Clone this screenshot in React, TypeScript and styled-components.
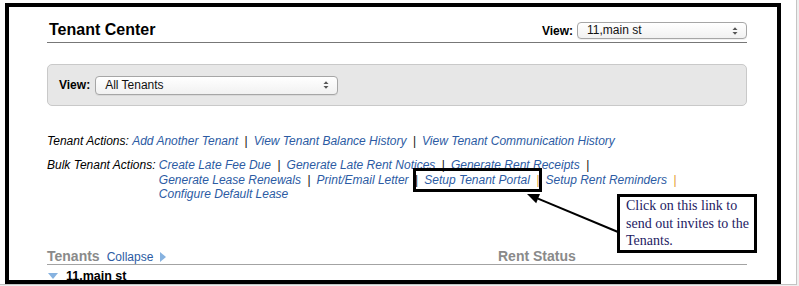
import styled, { createGlobalStyle } from 'styled-components';

const GlobalStyle = createGlobalStyle`
  html, body {
    margin: 0;
    padding: 0;
    background: #efefef;
  }
  body {
    font-family: 'Liberation Sans', Arial, sans-serif;
  }
`;

const Page = styled.div`
  box-sizing: border-box;
  width: 797px;
  height: 285px;
  padding: 3px 0 0 5px;
  background: #fff;
  border-right: 1px solid #c4c4c4;
  border-bottom: 1px solid #c4c4c4;
`;

const Frame = styled.div`
  position: relative;
  box-sizing: border-box;
  width: 776px;
  height: 281px;
  border: 4px solid #000;
  padding: 0 30px 0 38px;
  overflow: hidden;
`;

const Header = styled.div`
  display: flex;
  justify-content: space-between;
  align-items: flex-end;
  margin-top: 13px;
  padding-bottom: 3px;
  box-sizing: border-box;
  border-bottom: 1px solid #777;
  height: 23px;
`;

const Title = styled.div`
  font-size: 16px;
  font-weight: bold;
  color: #000;
  line-height: 18px;
  padding-left: 2px;
`;

const ViewField = styled.div`
  display: flex;
  align-items: center;
  gap: 4px;
`;

const ViewLabel = styled.span`
  font-size: 12px;
  font-weight: bold;
  color: #000;
`;

const SelectBox = styled.div<{ $width: number; $height: number }>`
  position: relative;
  box-sizing: border-box;
  width: ${(p) => p.$width}px;
  height: ${(p) => p.$height}px;
  border: 1px solid #a6a6a6;
  border-radius: 4px;
  background: linear-gradient(#ffffff, #f1f1f1);
  box-shadow: 0 1px 0 rgba(0, 0, 0, 0.06);
  font-size: 12px;
  color: #111;
  line-height: ${(p) => p.$height - 2}px;
  padding-left: 9px;
`;

const Arrows = styled.svg`
  position: absolute;
  right: 8px;
  top: 50%;
  transform: translateY(-50%);
`;

const Panel = styled.div`
  box-sizing: border-box;
  height: 42px;
  margin-top: 21px;
  padding: 0 11px;
  display: flex;
  align-items: center;
  gap: 5px;
  background: #e7e7e7;
  border: 1px solid #c9c9c9;
  border-radius: 5px;
`;

const ActionRow = styled.div<{ $top: number; $lh: number }>`
  display: flex;
  margin-top: ${(p) => p.$top}px;
  font-size: 12px;
  font-style: italic;
  line-height: ${(p) => p.$lh}px;
  color: #000;
`;

const ActionLabel = styled.span`
  white-space: pre;
`;

const LinkLines = styled.div`
  display: flex;
  flex-direction: column;
`;

const Line = styled.div`
  white-space: nowrap;
`;

const ActionLink = styled.a`
  color: #2c5ba3;
  text-decoration: none;
  cursor: pointer;
`;

const Sep = styled.span<{ $hot?: boolean }>`
  margin: 0 6px 0 6.5px;
  font-style: normal;
  color: ${(p) => (p.$hot ? '#e39a2b' : '#111')};
`;

const TenantsHead = styled.div`
  display: grid;
  grid-template-columns: 451px 1fr;
  margin-top: 47px;
  height: 15px;
  line-height: 15px;
  border-bottom: 1px solid #a3a3a3;
`;

const HeadCell = styled.div`
  display: flex;
  align-items: baseline;
`;

const HeadText = styled.span`
  font-size: 14px;
  font-weight: bold;
  color: #8a8a8a;
`;

const Collapse = styled.span`
  margin-left: 7px;
  font-size: 12px;
  color: #2c5ba3;
`;

const Triangle = styled.span<{ $dir: 'right' | 'down' }>`
  display: inline-block;
  width: 0;
  height: 0;
  ${(p) =>
    p.$dir === 'right'
      ? `border-top: 5.5px solid transparent;
         border-bottom: 5.5px solid transparent;
         border-left: 6px solid #86b2e0;
         margin-left: 7px;
         align-self: center;`
      : `border-left: 5.5px solid transparent;
         border-right: 5.5px solid transparent;
         border-top: 6px solid #86b2e0;`}
`;

const PropertyRow = styled.div`
  display: flex;
  align-items: center;
  gap: 8px;
  margin-top: 4px;
  padding-left: 1px;
  line-height: 15px;
`;

const PropertyName = styled.span`
  font-size: 12.5px;
  font-weight: bold;
  color: #000;
`;

const Highlight = styled.div`
  position: absolute;
  left: 404px;
  top: 161px;
  width: 129px;
  height: 24px;
  box-sizing: border-box;
  border: 3px solid #000;
`;

const Note = styled.div`
  position: absolute;
  left: 608px;
  top: 187px;
  width: 140px;
  height: 59px;
  box-sizing: border-box;
  border: 3px solid #000;
  background: #fff;
  padding: 0 0 0 6px;
  font-family: 'Liberation Serif', 'Times New Roman', serif;
  font-size: 14px;
  line-height: 17.5px;
  color: #1e2163;
`;

const ArrowLayer = styled.svg`
  position: absolute;
  left: 0;
  top: 0;
  pointer-events: none;
`;

const Select = ({ value, width, height }: { value: string; width: number; height: number }) => (
  <SelectBox $width={width} $height={height}>
    {value}
    <Arrows width="6" height="9" viewBox="0 0 6 9">
      <path d="M0.5 3.5 L3 0.8 L5.5 3.5 Z" fill="#555" />
      <path d="M0.5 5.5 L3 8.2 L5.5 5.5 Z" fill="#555" />
    </Arrows>
  </SelectBox>
);

export default function App() {
  return (
    <>
      <GlobalStyle />
      <Page>
        <Frame>
          <Header>
            <Title>Tenant Center</Title>
            <ViewField>
              <ViewLabel>View:</ViewLabel>
              <Select value="11,main st" width={170} height={17} />
            </ViewField>
          </Header>

          <Panel>
            <ViewLabel>View:</ViewLabel>
            <Select value="All Tenants" width={243} height={19} />
          </Panel>

          <ActionRow $top={28} $lh={15}>
            <ActionLabel>Tenant Actions: </ActionLabel>
            <Line>
              <ActionLink>Add Another Tenant</ActionLink>
              <Sep>|</Sep>
              <ActionLink>View Tenant Balance History</ActionLink>
              <Sep>|</Sep>
              <ActionLink>View Tenant Communication History</ActionLink>
            </Line>
          </ActionRow>

          <ActionRow $top={9} $lh={14.5}>
            <ActionLabel>Bulk Tenant Actions: </ActionLabel>
            <LinkLines>
              <Line>
                <ActionLink>Create Late Fee Due</ActionLink>
                <Sep>|</Sep>
                <ActionLink>Generate Late Rent Notices</ActionLink>
                <Sep>|</Sep>
                <ActionLink>Generate Rent Receipts</ActionLink>
                <Sep>|</Sep>
              </Line>
              <Line>
                <ActionLink>Generate Lease Renewals</ActionLink>
                <Sep>|</Sep>
                <ActionLink>Print/Email Letter</ActionLink>
                <Sep>|</Sep>
                <ActionLink>Setup Tenant Portal</ActionLink>
                <Sep $hot>|</Sep>
                <ActionLink>Setup Rent Reminders</ActionLink>
                <Sep $hot>|</Sep>
              </Line>
              <Line>
                <ActionLink>Configure Default Lease</ActionLink>
              </Line>
            </LinkLines>
          </ActionRow>

          <TenantsHead>
            <HeadCell>
              <HeadText>Tenants</HeadText>
              <Collapse>Collapse</Collapse>
              <Triangle $dir="right" />
            </HeadCell>
            <HeadCell>
              <HeadText>Rent Status</HeadText>
            </HeadCell>
          </TenantsHead>

          <PropertyRow>
            <Triangle $dir="down" />
            <PropertyName>11.main st</PropertyName>
          </PropertyRow>

          <Highlight />
          <ArrowLayer width="768" height="273" viewBox="0 0 768 273">
            <line x1="609" y1="225" x2="529" y2="191.6" stroke="#000" strokeWidth="2" />
            <path d="M518 187 L531 187 L527.2 196.2 Z" fill="#000" />
          </ArrowLayer>
          <Note>
            Click on this link to
            <br />
            send out invites to the
            <br />
            Tenants.
          </Note>
        </Frame>
      </Page>
    </>
  );
}
